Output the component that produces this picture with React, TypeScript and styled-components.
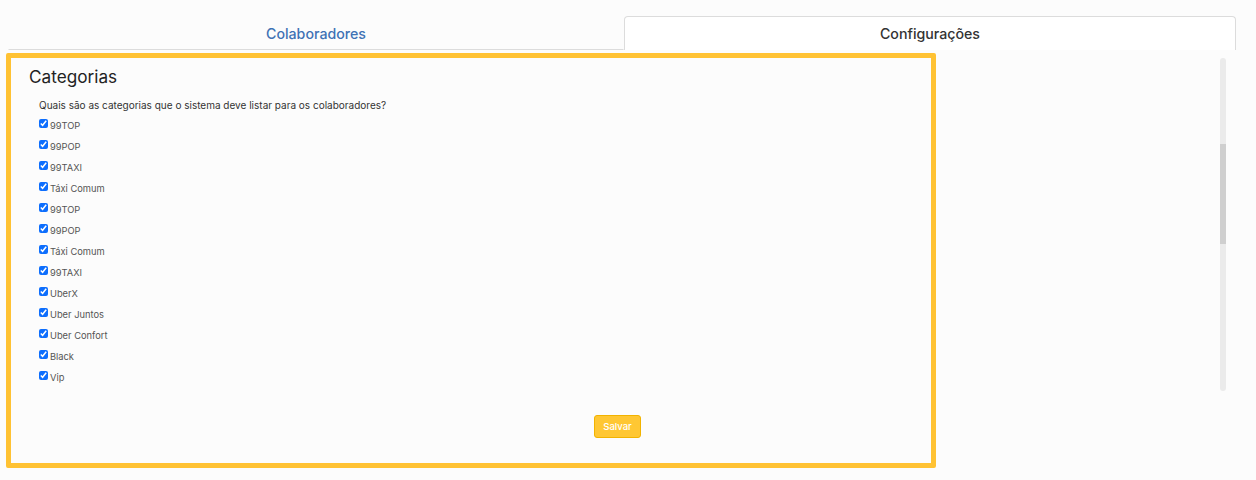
import React from 'react';
import styled, { createGlobalStyle } from 'styled-components';

const GlobalStyle = createGlobalStyle`
  body {
    margin: 0;
    background: #fcfcfc;
    font-family: Inter, 'Noto Sans', sans-serif;
    color: #333;
  }
`;

const Page = styled.div`
  padding: 16px 20px 0 8px;
  height: 480px;
  box-sizing: border-box;
`;

const Tabs = styled.div`
  display: flex;
  height: 34px;
`;

const Tab = styled.div<{ $active?: boolean }>`
  flex: ${(p) => (p.$active ? '0 0 612px' : '1')};
  display: flex;
  align-items: center;
  justify-content: center;
  font-size: 14.2px;
  font-weight: 500;
  color: ${(p) => (p.$active ? '#333' : '#3f72b5')};
  background: ${(p) => (p.$active ? '#fff' : 'transparent')};
  border: 1px solid ${(p) => (p.$active ? '#dcdcdc' : 'transparent')};
  border-bottom: ${(p) => (p.$active ? 'none' : '1px solid #dcdcdc')};
  border-radius: ${(p) => (p.$active ? '4px 4px 0 0' : '0')};
  box-sizing: border-box;
`;

const Content = styled.div`
  position: relative;
`;

const ScrollRow = styled.div`
  display: flex;
  height: 341px;
`;

const Section = styled.div`
  flex: 1;
  padding: 16px 0 0 21px;
`;

const Title = styled.h2`
  margin: 0 0 12px;
  font-size: 17.2px;
  font-weight: 400;
  color: #222;
`;

const Question = styled.p`
  margin: 0 0 4px 10px;
  font-size: 10px;
  color: #333;
`;

const List = styled.div`
  display: flex;
  flex-direction: column;
  padding-left: 10px;
`;

const Item = styled.label`
  display: flex;
  align-items: center;
  height: 21px;
  font-size: 9.3px;
  color: #555;
`;

const Check = styled.input`
  width: 9px;
  height: 9px;
  margin: -4px 2px 0 0;
  accent-color: #0d6efd;
`;

const ScrollTrack = styled.div`
  width: 6px;
  margin: 8px 10px 0 0;
  background: #ebebeb;
  border-radius: 3px;
  display: flex;
  flex-direction: column;
  padding-top: 86px;
`;

const ScrollThumb = styled.div`
  height: 100px;
  background: #cfcfcf;
`;

const Footer = styled.div`
  display: flex;
  justify-content: center;
  padding: 24px 9px 0 0;
`;

const SaveButton = styled.button`
  width: 47px;
  height: 23px;
  background: #ffc733;
  border: 1px solid #f2b300;
  border-radius: 3px;
  color: #fff;
  font-family: inherit;
  font-size: 9.5px;
  font-weight: 500;
  padding: 0;
`;

const Highlight = styled.div`
  position: absolute;
  left: -2px;
  top: 3px;
  width: 930px;
  height: 415px;
  box-sizing: border-box;
  border: 5px solid #ffc233;
  border-radius: 2px;
  pointer-events: none;
`;

const categories = [
  '99TOP',
  '99POP',
  '99TAXI',
  'Táxi Comum',
  '99TOP',
  '99POP',
  'Táxi Comum',
  '99TAXI',
  'UberX',
  'Uber Juntos',
  'Uber Confort',
  'Black',
  'Vip',
];

export default function App() {
  return (
    <>
      <GlobalStyle />
      <Page>
        <Tabs>
          <Tab>Colaboradores</Tab>
          <Tab $active>Configurações</Tab>
        </Tabs>
        <Content>
          <ScrollRow>
            <Section>
              <Title>Categorias</Title>
              <Question>Quais são as categorias que o sistema deve listar para os colaboradores?</Question>
              <List>
                {categories.map((c, i) => (
                  <Item key={i}>
                    <Check type="checkbox" defaultChecked />
                    {c}
                  </Item>
                ))}
              </List>
            </Section>
            <ScrollTrack>
              <ScrollThumb />
            </ScrollTrack>
          </ScrollRow>
          <Footer>
            <SaveButton>Salvar</SaveButton>
          </Footer>
          <Highlight />
        </Content>
      </Page>
    </>
  );
}
